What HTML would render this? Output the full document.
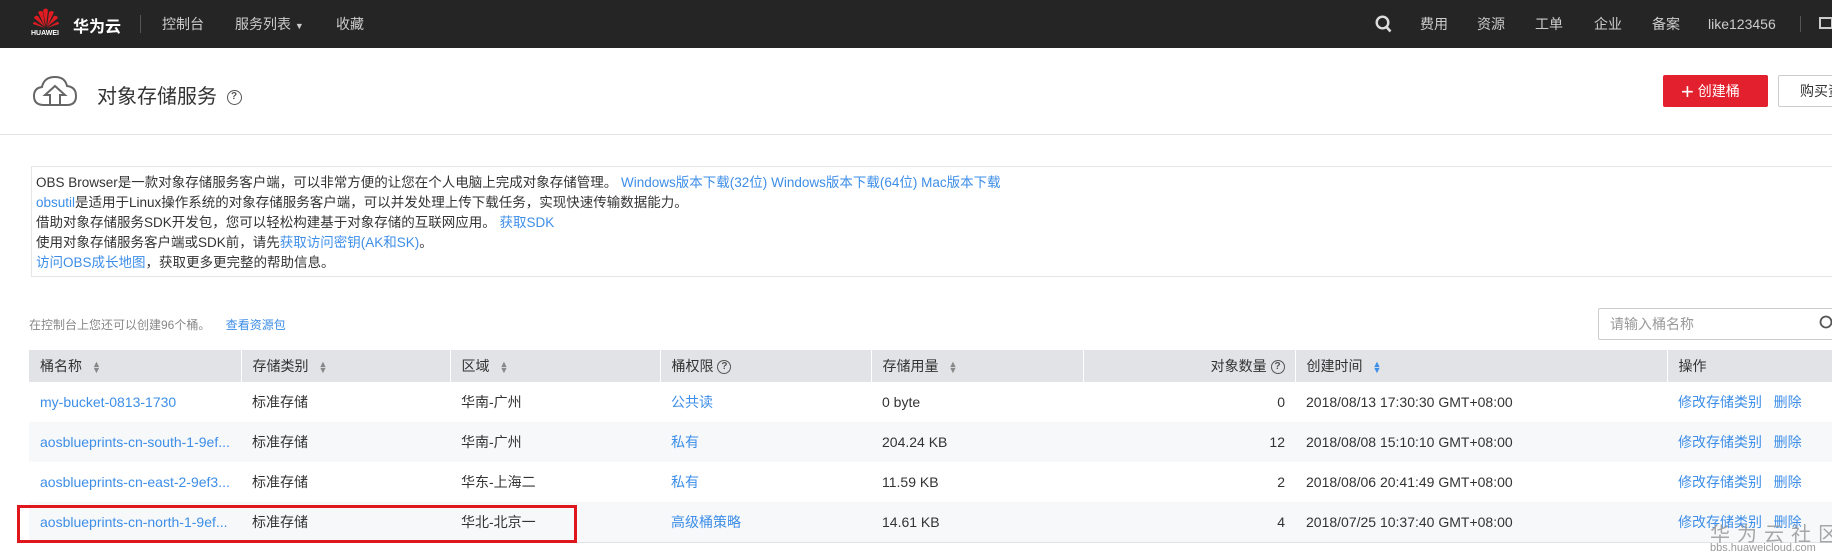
<!DOCTYPE html>
<html><head><meta charset="utf-8">
<style>
*{margin:0;padding:0;box-sizing:border-box}
body{width:1832px;height:559px;overflow:hidden;background:#fff;font-family:"Liberation Sans","Noto Sans CJK SC",sans-serif;color:#333;font-size:14px;position:relative}
.abs{position:absolute;white-space:nowrap}
.nav{position:absolute;left:0;top:0;width:1832px;height:48px;background:#252525}
.nav .t{position:absolute;top:14px;color:#ccc;font-size:14px;line-height:20px}
a,.lk{color:#3d8ee8;text-decoration:none}
.hdr{position:absolute;left:0;top:48px;width:1832px;height:87px;border-bottom:1px solid #e3e3e3}
.info{position:absolute;left:31px;top:166px;width:1801px;height:111px;border:1px solid #e6e6e6;border-right:none;padding:6px 0 0 4px;font-size:13.5px;line-height:20px;color:#333}
table{position:absolute;left:29px;top:350px;width:1803px;border-collapse:collapse;font-size:14px}
th{height:32px;background:#e1e3e6;font-weight:normal;text-align:left;padding-left:11px;border-left:1px solid #fff;color:#333}
th:first-child{border-left:none}
td{height:40px;padding-left:11px;white-space:nowrap}
tr.g td{background:#f7f8fa}
tbody tr:last-child td{border-bottom:1px solid #e3e3e3}
.s{display:inline-block;margin-left:10px;font-size:9px;color:#888;line-height:6px;vertical-align:middle}
.q{display:inline-block;width:14px;height:14px;border:1.5px solid #555;border-radius:50%;font-size:10px;line-height:11px;text-align:center;vertical-align:middle;color:#555;font-weight:bold}
</style></head><body>
<div class="nav">
  <svg class="abs" style="left:33px;top:7px" width="26" height="22" viewBox="0 0 26 22">
    <g fill="#e01b22">
      <path d="M13 20 L10 3 Q13 0 15 3Z"/>
      <path d="M12 20 L5 5 Q8 3 10 5Z"/>
      <path d="M14 20 L21 5 Q18 3 16 5Z"/>
      <path d="M12 20 L1 11 Q2 8 5 9Z"/>
      <path d="M14 20 L25 11 Q24 8 21 9Z"/>
      <path d="M12 21 L0 17 Q0 15 2 15Z"/>
      <path d="M14 21 L26 17 Q26 15 24 15Z"/>
    </g>
  </svg>
  <div class="abs" style="left:31px;top:30px;color:#fff;font-size:7px;font-weight:bold;letter-spacing:0">HUAWEI</div>
  <div class="abs" style="left:73px;top:13px;color:#fff;font-size:16px;font-weight:bold">华为云</div>
  <div class="abs" style="left:140px;top:15px;width:1px;height:18px;background:#555"></div>
  <div class="t" style="left:162px">控制台</div>
  <div class="t" style="left:235px">服务列表 <span style="font-size:9px">▼</span></div>
  <div class="t" style="left:336px">收藏</div>
  <svg class="abs" style="left:1375px;top:15px" width="17" height="18" viewBox="0 0 17 18"><circle cx="7.5" cy="7.5" r="5.8" fill="none" stroke="#ddd" stroke-width="2.4"/><path d="M11.5 12 L15.5 16.5" stroke="#ddd" stroke-width="2.6"/></svg>
  <div class="t" style="left:1420px">费用</div>
  <div class="t" style="left:1477px">资源</div>
  <div class="t" style="left:1535px">工单</div>
  <div class="t" style="left:1594px">企业</div>
  <div class="t" style="left:1652px">备案</div>
  <div class="t" style="left:1708px">like123456</div>
  <div class="abs" style="left:1800px;top:16px;width:1px;height:16px;background:#555"></div>
  <div class="abs" style="left:1819px;top:17px;width:14px;height:12px;border:2px solid #ccc"></div>
</div>
<div class="hdr">
  <svg class="abs" style="left:32px;top:26px" width="46" height="34" viewBox="0 0 46 34"><path d="M12 31 Q2 31 2 22 Q2 14 10 13 Q12 3 23 3 Q33 3 35 12 Q44 13 44 22 Q44 31 35 31 Z" fill="none" stroke="#666" stroke-width="2"/><path d="M18 31 V21 H13 L23 12 L33 21 H28 V31" fill="none" stroke="#666" stroke-width="2"/></svg>
  <div class="abs" style="left:97px;top:32px;font-size:20px;color:#333">对象存储服务 <span class="q" style="margin-left:4px;width:15px;height:15px">?</span></div>
  <div class="abs" style="left:1663px;top:27px;width:105px;height:32px;background:#e3202e;border-radius:2px;color:#fff;font-size:14px;line-height:32px;padding-left:18px"><span style="font-size:22px;vertical-align:-3px">+</span> 创建桶</div>
  <div class="abs" style="left:1778px;top:27px;width:60px;height:32px;border:1px solid #ccc;border-radius:2px;font-size:14px;line-height:30px;padding-left:21px">购买资源包</div>
</div>
<div class="info">
OBS Browser是一款对象存储服务客户端，可以非常方便的让您在个人电脑上完成对象存储管理。 <a>Windows版本下载(32位)</a> <a>Windows版本下载(64位)</a> <a>Mac版本下载</a><br>
<a>obsutil</a>是适用于Linux操作系统的对象存储服务客户端，可以并发处理上传下载任务，实现快速传输数据能力。<br>
借助对象存储服务SDK开发包，您可以轻松构建基于对象存储的互联网应用。 <a>获取SDK</a><br>
使用对象存储服务客户端或SDK前，请先<a>获取访问密钥(AK和SK)</a>。<br>
<a>访问OBS成长地图</a>，获取更多更完整的帮助信息。
</div>
<div class="abs" style="left:29px;top:316px;font-size:12px;color:#888">在控制台上您还可以创建96个桶。 <a style="margin-left:12px">查看资源包</a></div>
<div class="abs" style="left:1598px;top:308px;width:240px;height:32px;border:1px solid #ccc;border-radius:2px;font-size:14px;color:#999;line-height:30px;padding-left:11px">请输入桶名称</div>
<svg class="abs" style="left:1818px;top:315px" width="14" height="16"><circle cx="8" cy="7" r="5.5" fill="none" stroke="#555" stroke-width="1.8"/></svg>
<table>
<colgroup><col style="width:212px"><col style="width:209px"><col style="width:210px"><col style="width:211px"><col style="width:212px"><col style="width:212px"><col style="width:372px"><col></colgroup>
<thead><tr>
<th>桶名称<span class="s">▲<br>▼</span></th>
<th>存储类别<span class="s">▲<br>▼</span></th>
<th>区域<span class="s">▲<br>▼</span></th>
<th>桶权限 <span class="q">?</span></th>
<th>存储用量<span class="s">▲<br>▼</span></th>
<th style="text-align:right;padding-right:10px">对象数量 <span class="q">?</span></th>
<th>创建时间<span class="s" style="color:#3d8ee8">▲<br>▼</span></th>
<th>操作</th>
</tr></thead>
<tbody>
<tr><td class="lk">my-bucket-0813-1730</td><td>标准存储</td><td>华南-广州</td><td class="lk">公共读</td><td>0 byte</td><td style="text-align:right;padding-right:10px">0</td><td>2018/08/13 17:30:30 GMT+08:00</td><td><a>修改存储类别</a>&nbsp;&nbsp; <a>删除</a></td></tr>
<tr class="g"><td class="lk">aosblueprints-cn-south-1-9ef...</td><td>标准存储</td><td>华南-广州</td><td class="lk">私有</td><td>204.24 KB</td><td style="text-align:right;padding-right:10px">12</td><td>2018/08/08 15:10:10 GMT+08:00</td><td><a>修改存储类别</a>&nbsp;&nbsp; <a>删除</a></td></tr>
<tr><td class="lk">aosblueprints-cn-east-2-9ef3...</td><td>标准存储</td><td>华东-上海二</td><td class="lk">私有</td><td>11.59 KB</td><td style="text-align:right;padding-right:10px">2</td><td>2018/08/06 20:41:49 GMT+08:00</td><td><a>修改存储类别</a>&nbsp;&nbsp; <a>删除</a></td></tr>
<tr class="g"><td class="lk">aosblueprints-cn-north-1-9ef...</td><td>标准存储</td><td>华北-北京一</td><td class="lk">高级桶策略</td><td>14.61 KB</td><td style="text-align:right;padding-right:10px">4</td><td>2018/07/25 10:37:40 GMT+08:00</td><td><a>修改存储类别</a>&nbsp;&nbsp; <a>删除</a></td></tr>
</tbody></table>
<div class="abs" style="left:17px;top:505px;width:560px;height:38px;border:3px solid #e0161d"></div>
<div class="abs" style="left:1710px;top:518px;font-size:20px;color:#999;letter-spacing:7px;opacity:.85">华为云社区</div>
<div class="abs" style="left:1710px;top:542px;font-size:11px;color:#999">bbs.huaweicloud.com</div>
</body></html>
